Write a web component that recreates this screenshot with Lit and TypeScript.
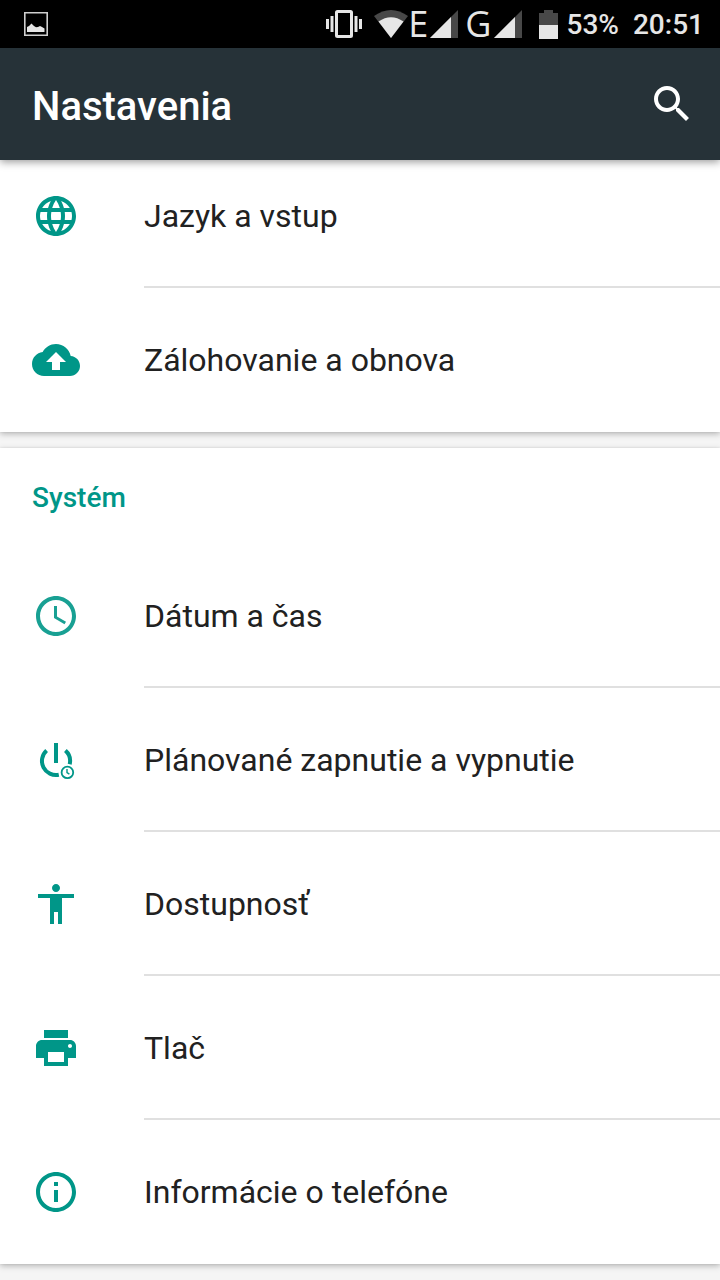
import { LitElement, html, css, svg } from "lit";
import { customElement, property } from "lit/decorators.js";

const icons = {
  language: svg`<path d="M11.99 2C6.47 2 2 6.48 2 12s4.47 10 9.99 10C17.52 22 22 17.52 22 12S17.52 2 11.99 2zm6.93 6h-2.95c-.32-1.25-.78-2.45-1.38-3.56 1.84.63 3.37 1.91 4.33 3.56zM12 4.04c.83 1.2 1.48 2.53 1.91 3.96h-3.82c.43-1.43 1.08-2.76 1.91-3.96zM4.26 14C4.1 13.36 4 12.69 4 12s.1-1.36.26-2h3.38c-.08.66-.14 1.32-.14 2 0 .68.06 1.34.14 2H4.26zm.82 2h2.95c.32 1.25.78 2.45 1.38 3.56-1.84-.63-3.37-1.9-4.33-3.56zm2.95-8H5.08c.96-1.66 2.49-2.93 4.33-3.56C8.81 5.55 8.35 6.75 8.03 8zM12 19.96c-.83-1.2-1.48-2.53-1.91-3.96h3.82c-.43 1.43-1.08 2.76-1.91 3.96zM14.34 14H9.66c-.09-.66-.16-1.32-.16-2 0-.68.07-1.35.16-2h4.68c.09.65.16 1.32.16 2 0 .68-.07 1.34-.16 2zm.25 5.56c.6-1.11 1.06-2.31 1.38-3.56h2.95c-.96 1.65-2.49 2.93-4.33 3.56zM16.36 14c.08-.66.14-1.32.14-2 0-.68-.06-1.34-.14-2h3.38c.16.64.26 1.31.26 2s-.1 1.36-.26 2h-3.38z"/>`,
  backup: svg`<path d="M19.35 10.04C18.67 6.59 15.64 4 12 4 9.11 4 6.6 5.64 5.35 8.04 2.34 8.36 0 10.91 0 14c0 3.31 2.69 6 6 6h13c2.76 0 5-2.24 5-5 0-2.64-2.05-4.78-4.65-4.96zM14 13v4h-4v-4H7l5-5 5 5h-3z"/>`,
  clock: svg`<g opacity=".9"><path d="M11.99 2C6.47 2 2 6.48 2 12s4.47 10 9.99 10C17.52 22 22 17.52 22 12S17.52 2 11.99 2zM12 20c-4.42 0-8-3.58-8-8s3.58-8 8-8 8 3.58 8 8-3.58 8-8 8z"/><path d="M12.5 7H11v6l5.25 3.15.75-1.23-4.5-2.67z"/></g>`,
  power: svg`<g fill="none" stroke="currentColor"><path stroke-width="2" d="M12 3.500v10M7.300 7.300A7 7 0 0 0 13.400 19.360M16.700 7.300A7 7 0 0 1 18.850 14.100"/><circle cx="17.700" cy="18.200" r="2.900" stroke-width=".9"/><path stroke-width=".7" d="M17.500 16.500v1.800l1.200.8"/></g>`,
  accessibility: svg`<path d="M12 2c1.1 0 2 .9 2 2s-.9 2-2 2-2-.9-2-2 .9-2 2-2zm9 7h-6v13h-2v-6h-2v6H9V9H3V7h18v2z"/>`,
  print: svg`<path d="M19 8H5c-1.66 0-3 1.34-3 3v6h4v4h12v-4h4v-6c0-1.66-1.34-3-3-3zm-3 11H8v-5h8v5zm3-7c-.55 0-1-.45-1-1s.45-1 1-1 1 .45 1 1-.45 1-1 1zm-1-9H6v4h12V3z"/>`,
  info: svg`<path d="M11 17h2v-6h-2v6zm1-15C6.48 2 2 6.48 2 12s4.48 10 10 10 10-4.48 10-10S17.52 2 12 2zm0 18c-4.41 0-8-3.59-8-8s3.59-8 8-8 8 3.59 8 8-3.59 8-8 8zM11 9h2V7h-2v2z"/>`,
};

type IconName = keyof typeof icons;
interface Entry { icon: IconName; label: string; }

const personal: Entry[] = [
  { icon: "language", label: "Jazyk a vstup" },
  { icon: "backup", label: "Zálohovanie a obnova" },
];

const system: Entry[] = [
  { icon: "clock", label: "Dátum a čas" },
  { icon: "power", label: "Plánované zapnutie a vypnutie" },
  { icon: "accessibility", label: "Dostupnosť" },
  { icon: "print", label: "Tlač" },
  { icon: "info", label: "Informácie o telefóne" },
];

@customElement("status-bar")
class StatusBar extends LitElement {
  static styles = css`
    :host {
      display: flex;
      justify-content: space-between;
      align-items: center;
      height: 48px;
      padding: 0 16px 0 24px;
      background: #000;
      color: #e6e6e6;
      font: 500 28px/48px Roboto, sans-serif;
    }
    svg { display: block; flex: none; }
    .right, .network { display: flex; align-items: center; }
    .network { gap: 2px; }
    .network + .network { margin-left: 7px; }
    .wifi { margin-left: 12px; }
    .type { font: 400 36px/48px "Open Sans", sans-serif; }
    .battery { margin: 0 8px 0 17px; }
    .text { padding-top: 2px; }
    .time { margin-left: 14px; }
  `;

  private signal() {
    return html`<svg width="28" height="28" viewBox="0 0 28 28" aria-hidden="true">
      <path fill="#484848" d="M28 0v28H0z"/><path fill="#e6e6e6" d="M21 7v21H0z"/>
    </svg>`;
  }

  render() {
    return html`
      <svg width="24" height="24" viewBox="0 0 24 24" aria-hidden="true">
        <path fill="none" stroke="#cfcfcf" stroke-width="1.6" d="M.8.8h22.4v22.4H.8z"/>
        <path fill="#e6e6e6" d="M3 20v-5l2-1 2.500-2.500L10 14l2 1.300 2-.3 2-1 2 1 2.500 1.500V20z"/>
      </svg>
      <div class="right">
        <svg width="36" height="28" viewBox="0 0 36 28" aria-hidden="true">
          <g fill="#e6e6e6"><path d="M0 9h3v10H0zM4.500 6h3v16h-3zM28.500 6h3v16h-3zM33 9h3v10h-3z"/></g>
          <rect x="10.500" y="1.500" width="15" height="25" rx="1" fill="none" stroke="#e6e6e6" stroke-width="3"/>
        </svg>
        <svg class="wifi" width="34" height="28" viewBox="0 0 34 28" aria-hidden="true">
          <path fill="#484848" d="M0 6Q17-6 34 6L17 28z"/><path fill="#e6e6e6" d="M4.500 11.500Q17 3 29.500 11.500L17 28z"/>
        </svg>
        <div class="network"><span class="type">E</span>${this.signal()}</div>
        <div class="network"><span class="type">G</span>${this.signal()}</div>
        <svg class="battery" width="20" height="29" viewBox="0 0 20 29" aria-hidden="true">
          <path fill="#484848" d="M0 3h5V0h9v3h5v13H0z"/><path fill="#e6e6e6" d="M0 15h19v14H0z"/>
        </svg>
        <span class="text">53%</span><span class="text time">20:51</span>
      </div>`;
  }
}

@customElement("settings-card")
class SettingsCard extends LitElement {
  @property() heading = "";
  @property({ attribute: false }) entries: Entry[] = [];

  static styles = css`
    :host {
      display: block;
      background: #fff;
      box-shadow: 0 2px 6px rgba(0, 0, 0, 0.26), 0 0 2px rgba(0, 0, 0, 0.08);
    }
    h2 {
      margin: 0;
      padding: 4px 32px 0;
      color: #009688;
      font: 500 28px/92px Roboto, sans-serif;
    }
    ul { margin: 0; padding: 0; list-style: none; }
    a {
      display: grid;
      grid-template-columns: 112px 1fr;
      align-items: center;
      padding-left: 32px;
      color: #212121;
      text-decoration: none;
      font: 400 32px/144px Roboto, sans-serif;
    }
    svg { display: block; width: 48px; height: 48px; color: #009688; fill: currentColor; }
    li:not(:last-child) .label { box-shadow: inset 0 -2px #e0e0e0; }
  `;

  render() {
    return html`
      ${this.heading ? html`<h2>${this.heading}</h2>` : null}
      <ul>
        ${this.entries.map((e) => html`<li><a href="#">
          <svg viewBox="0 0 24 24" aria-hidden="true">${icons[e.icon]}</svg>
          <span class="label">${e.label}</span>
        </a></li>`)}
      </ul>`;
  }
}

@customElement("app-root")
class AppRoot extends LitElement {
  static styles = css`
    :host {
      display: flex;
      flex-direction: column;
      height: 100vh;
      overflow: hidden;
      background: #f5f5f5;
    }
    header {
      display: flex;
      flex: none;
      align-items: center;
      justify-content: space-between;
      height: 112px;
      padding: 0 24px 0 32px;
      background: #263238;
      color: #fff;
      box-shadow: 0 2px 8px rgba(0, 0, 0, 0.4);
      z-index: 1;
    }
    h1 { margin: 0; padding-top: 6px; font: 500 40px/48px Roboto, sans-serif; }
    button { padding: 0; border: 0; background: none; color: inherit; }
    svg { display: block; width: 48px; height: 48px; fill: currentColor; }
    status-bar { flex: none; }
    main {
      display: flex;
      flex: 1;
      flex-direction: column;
      gap: 16px;
      min-height: 0;
      margin-top: -16px;
    }
    settings-card { flex: none; }
  `;

  render() {
    return html`
      <status-bar></status-bar>
      <header>
        <h1>Nastavenia</h1>
        <button aria-label="Hľadať">
          <svg viewBox="0 0 24 24" aria-hidden="true"><path d="M15.500 14h-.79l-.28-.27C15.410 12.590 16 11.110 16 9.500 16 5.910 13.090 3 9.500 3S3 5.910 3 9.500 5.910 16 9.500 16c1.610 0 3.090-.59 4.230-1.570l.27.28v.79l5 4.990L20.490 19l-4.990-5zm-6 0C7.010 14 5 11.990 5 9.500S7.010 5 9.500 5 14 7.010 14 9.500 11.990 14 9.500 14z"/></svg>
        </button>
      </header>
      <main>
        <settings-card .entries=${personal}></settings-card>
        <settings-card heading="Systém" .entries=${system}></settings-card>
      </main>`;
  }
}
